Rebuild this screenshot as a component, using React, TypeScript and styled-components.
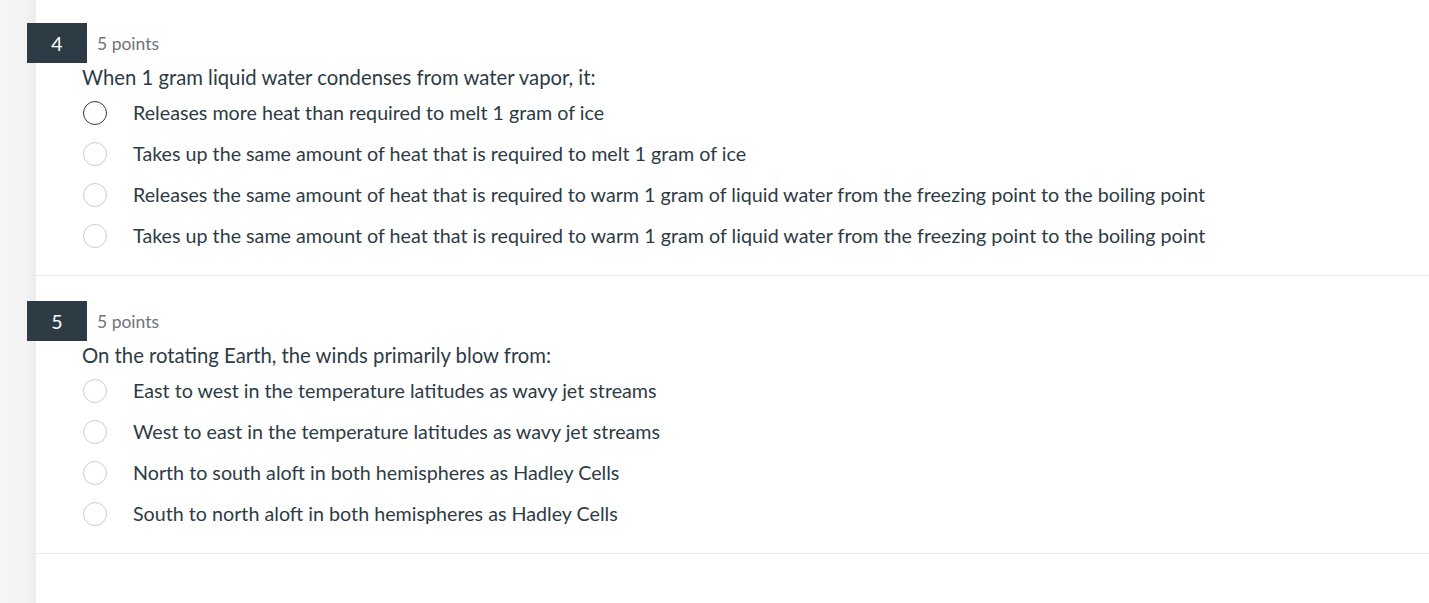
import styled, { createGlobalStyle } from "styled-components";

const GlobalStyle = createGlobalStyle`
  html, body {
    margin: 0;
    padding: 0;
    background: #ffffff;
    font-family: Lato, "Noto Sans", sans-serif;
    color: #2d3b45;
  }
`;

type Quiz = {
  num: number;
  points: string;
  text: string;
  answers: string[];
  focused?: number;
};

const questions: Quiz[] = [
  {
    num: 4,
    points: "5 points",
    text: "When 1 gram liquid water condenses from water vapor, it:",
    answers: [
      "Releases more heat than required to melt 1 gram of ice",
      "Takes up the same amount of heat that is required to melt 1 gram of ice",
      "Releases the same amount of heat that is required to warm 1 gram of liquid water from the freezing point to the boiling point",
      "Takes up the same amount of heat that is required to warm 1 gram of liquid water from the freezing point to the boiling point",
    ],
    focused: 0,
  },
  {
    num: 5,
    points: "5 points",
    text: "On the rotating Earth, the winds primarily blow from:",
    answers: [
      "East to west in the temperature latitudes as wavy jet streams",
      "West to east in the temperature latitudes as wavy jet streams",
      "North to south aloft in both hemispheres as Hadley Cells",
      "South to north aloft in both hemispheres as Hadley Cells",
    ],
  },
];

export default function App() {
  return (
    <>
      <GlobalStyle />
      <Page>
        <Rail />
        <Content>
          {questions.map((q) => (
            <Question key={q.num}>
              <Header>
                <Badge>{q.num}</Badge>
                <Points>{q.points}</Points>
              </Header>
              <Prompt>{q.text}</Prompt>
              <Answers>
                {q.answers.map((a, i) => (
                  <Answer key={i}>
                    <Radio $dark={q.focused === i} />
                    <AnswerText>{a}</AnswerText>
                  </Answer>
                ))}
              </Answers>
            </Question>
          ))}
        </Content>
      </Page>
    </>
  );
}

const Page = styled.div`
  display: flex;
  min-height: 603px;
`;

const Rail = styled.div`
  width: 36px;
  flex-shrink: 0;
  background: linear-gradient(to right, #f5f5f5 0%, #f3f3f3 70%, #ececec 100%);
`;

const Content = styled.div`
  flex: 1;
  display: flex;
  flex-direction: column;
`;

const Question = styled.div`
  padding: 25px 0 19px 46px;
  border-bottom: 1px solid #ededed;

  &:first-child {
    padding-top: 23px;
  }
`;

const Header = styled.div`
  display: flex;
  align-items: center;
  gap: 10px;
  margin-left: -55px;
  height: 40px;
`;

const Badge = styled.div`
  width: 60px;
  height: 40px;
  background: #2d3b45;
  color: #ffffff;
  font-size: 19.5px;
  display: flex;
  align-items: center;
  justify-content: center;
`;

const Points = styled.span`
  font-size: 17.5px;
  color: #6f7478;
`;

const Prompt = styled.div`
  font-size: 20.3px;
  line-height: 27px;
  margin-top: 1px;
`;

const Answers = styled.div`
  display: flex;
  flex-direction: column;
  margin-top: 1px;
`;

const Answer = styled.div`
  display: flex;
  align-items: center;
  height: 41px;
  padding-left: 1px;
  gap: 26px;
`;

const Radio = styled.span<{ $dark?: boolean }>`
  box-sizing: border-box;
  width: 24px;
  height: 24px;
  border-radius: 50%;
  flex-shrink: 0;
  border: ${(p) => (p.$dark ? "1.5px solid #2d3b45" : "1px solid #c7cdd1")};
  background: #ffffff;
`;

const AnswerText = styled.span`
  font-size: 19.7px;
  line-height: 27px;
`;
